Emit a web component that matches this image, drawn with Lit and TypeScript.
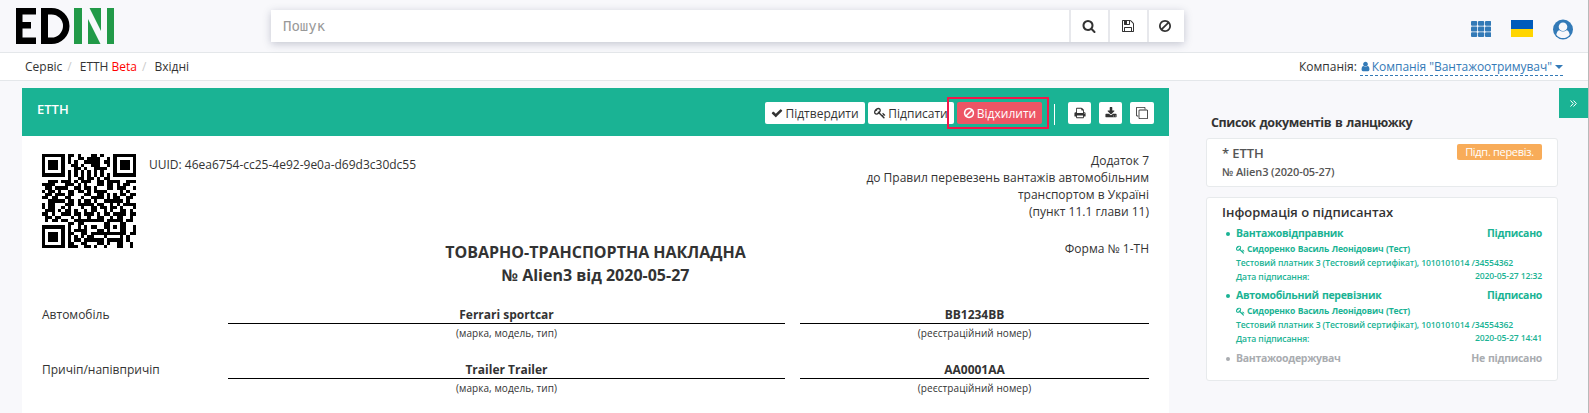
import { LitElement, html, svg, css } from "lit";
import { customElement, property } from "lit/decorators.js";

const PATHS: Record<string, string> = {
  search: "M1216 832q0-185-131.5-316.5t-316.5-131.5-316.5 131.5-131.5 316.5 131.5 316.5 316.5 131.5 316.5-131.5 131.5-316.5zm512 832q0 52-38 90t-90 38q-54 0-90-38l-343-342q-179 124-399 124-143 0-273.5-55.5t-225-150-150-225-55.5-273.5 55.5-273.5 150-225 225-150 273.5-55.5 273.5 55.5 225 150 150 225 55.5 273.5q0 220-124 399l343 343q37 37 37 90z",
  save: "M512 1536h768v-384h-768v384zm896 0h128v-896q0-14-10-38.5t-20-34.5l-281-281q-10-10-34-20t-39-10v416q0 40-28 68t-68 28h-576q-40 0-68-28t-28-68v-416h-128v1280h128v-416q0-40 28-68t68-28h832q40 0 68 28t28 68v416zm-384-928v-320q0-13-9.5-22.5t-22.5-9.5h-192q-13 0-22.5 9.5t-9.5 22.5v320q0 13 9.5 22.5t22.5 9.5h192q13 0 22.5-9.5t9.5-22.5zm640 32v928q0 40-28 68t-68 28h-1344q-40 0-68-28t-28-68v-1344q0-40 28-68t68-28h928q40 0 88 20t76 48l280 280q28 28 48 76t20 88z",
  ban: "M1440 893q0-161-87-295l-754 753q137 89 297 89 111 0 211.5-43.5t173.5-116.5 116-174.5 43-212.5zm-999 299l755-754q-135-91-300-91-148 0-273 73t-198 199-73 274q0 162 89 299zm1223-299q0 157-61 300t-163.5 246-245 164-298.5 61-298.5-61-245-164-163.5-246-61-300 61-299.5 163.5-245.5 245-164 298.5-61 298.5 61 245 164 163.5 245.5 61 299.5z",
  check: "M1671 566q0 40-28 68l-724 724-136 136q-28 28-68 28t-68-28l-136-136-362-362q-28-28-28-68t28-68l136-136q28-28 68-28t68 28l294 295 656-657q28-28 68-28t68 28l136 136q28 28 28 68z",
  key: "M832 512q0-80-56-136t-136-56-136 56-56 136q0 42 19 83-41-19-83-19-80 0-136 56t-56 136 56 136 136 56 136-56 56-136q0-42-19-83 41 19 83 19 80 0 136-56t56-136zm851 704q0 17-49 66t-66 49q-9 0-28.5-16t-36.5-33-38.5-40-24.5-26l-96 96 220 220q28 28 28 68 0 42-39 81t-81 39q-40 0-68-28l-671-671q-176 131-365 131-163 0-265.5-102.5t-102.5-265.5q0-160 95-313t248-248 313-95q163 0 265.5 102.5t102.5 265.5q0 189-131 365l355 355 96-96q-3-3-26-24.5t-40-38.5-33-36.5-16-28.5q0-17 49-66t66-49q13 0 23 10 6 6 46 44.5t82 79.5 86.5 86 73 78 28.5 41z",
  print: "M448 1536h896v-256h-896v256zm0-640h896v-384h-160q-40 0-68-28t-28-68v-160h-640v640zm1152 64q0-26-19-45t-45-19-45 19-19 45 19 45 45 19 45-19 19-45zm128 0v416q0 13-9.5 22.5t-22.5 9.5h-224v160q0 40-28 68t-68 28h-960q-40 0-68-28t-28-68v-160h-224q-13 0-22.5-9.5t-9.5-22.5v-416q0-79 56.5-135.5t135.5-56.5h64v-544q0-40 28-68t68-28h672q40 0 88 20t76 48l152 152q28 28 48 76t20 88v256h64q79 0 135.5 56.5t56.5 135.5z",
  download: "M1344 1344q0-26-19-45t-45-19-45 19-19 45 19 45 45 19 45-19 19-45zm256 0q0-26-19-45t-45-19-45 19-19 45 19 45 45 19 45-19 19-45zm128-224v320q0 40-28 68t-68 28h-1472q-40 0-68-28t-28-68v-320q0-40 28-68t68-28h465l135 136q58 56 136 56t136-56l136-136h464q40 0 68 28t28 68zm-325-569q17 41-14 70l-448 448q-18 19-45 19t-45-19l-448-448q-31-29-14-70 17-39 59-39h256v-448q0-26 19-45t45-19h256q26 0 45 19t19 45v448h256q42 0 59 39z",
  clone: "M1664 1632v-1088q0-13-9.5-22.5t-22.5-9.5h-1088q-13 0-22.5 9.5t-9.5 22.5v1088q0 13 9.5 22.5t22.5 9.5h1088q13 0 22.5-9.5t9.5-22.5zm128-1088v1088q0 66-47 113t-113 47h-1088q-66 0-113-47t-47-113v-1088q0-66 47-113t113-47h1088q66 0 113 47t47 113zm-384-384v160h-128v-160q0-13-9.5-22.5t-22.5-9.5h-1088q-13 0-22.5 9.5t-9.5 22.5v1088q0 13 9.5 22.5t22.5 9.5h160v128h-160q-66 0-113-47t-47-113v-1088q0-66 47-113t113-47h1088q66 0 113 47t47 113z",
  user: "M1536 1399q0 109-62.5 187t-150.5 78h-854q-88 0-150.5-78t-62.5-187q0-85 8.5-160.5t31.5-152 58.5-131 94-89 134.5-34.5q131 128 313 128t313-128q76 0 134.5 34.5t94 89 58.5 131 31.5 152 8.5 160.5zm-256-887q0 159-112.5 271.5t-271.5 112.5-271.5-112.5-112.5-271.5 112.5-271.5 271.5-112.5 271.5 112.5 112.5 271.5z",
};

const icon = (name: string, size: number) =>
  svg`<svg class="icon" width=${size} height=${size} viewBox="0 0 1792 1792"><path fill="currentColor" d=${PATHS[name]}/></svg>`;

const QR = [
  "#######.##.#...##.#...#######",
  "#.....#.#..##.####..#.#.....#",
  "#.###.#.#.#..#####.##.#.###.#",
  "#.###.#..##.#..###..#.#.###.#",
  "#.###.#...##.#..####..#.###.#",
  "#.....#.#.#.#.#.#.#...#.....#",
  "#######.#.#.#.#.#.#.#.#######",
  "........#..##.##.#.##........",
  "..###.###.#.###..##.####..###",
  "####...###.#.#...##.##.#.##..",
  ".##.####..##.##.#...##.###..#",
  "#.##.#..##.##.#.####....#.#..",
  ".##.###.##...##..##.#.#.##.##",
  "##.##..##...#..####.#.##..##.",
  "..#####.##.#.##.#..######.#..",
  "#.##...###.#####.##..#.#.####",
  "#.##..#.#...#..##.##.##.#...#",
  ".###.#.##.#..#.##..#.#..##.#.",
  "##.#..###.##.###.#.##.####.##",
  ".##.##...#.#..#..##..#.##..#.",
  ".#.##.##..#########.#####.##.",
  "........##.##......##...##...",
  "#######.#..#.#.##..##.#.##..#",
  "#.....#.#.####...##.#...##..#",
  "#.###.#.##..##.###########.##",
  "#.###.#.#.#.#.##...#....#.#..",
  "#.###.#.#.##.######.#####.#..",
  "#.....#.##..##...##.#..##..#.",
  "#######.###..##.#..#...##..#.",
];

@customElement("qr-code")
export class QrCode extends LitElement {
  static styles = css`
    :host { display: block; width: 94px; height: 94px; }
    .code { display: block; }
  `;
  render() {
    const d = QR.map((row, y) =>
      [...row].map((c, x) => (c === "#" ? `M${x} ${y}h1v1h-1z` : "")).join("")
    ).join("");
    return html`<svg class="code" width="94" height="94" viewBox="0 0 29 29" shape-rendering="crispEdges"><path d=${d} /></svg>`;
  }
}

@customElement("signer-entry")
export class SignerEntry extends LitElement {
  @property() role = "";
  @property() status = "";
  @property() date = "";
  static styles = css`
    :host { display: block; color: #1ab394; }
    :host(.pending) { color: #a9acb0; padding-top: 1px; }
    .row { display: flex; justify-content: space-between; }
    .head { font-size: 10.5px; font-weight: 700; line-height: 16px; letter-spacing: -0.3px; word-spacing: 0.8px; }
    .name { display: flex; align-items: center; gap: 2px; }
    .name::before { content: ""; width: 4px; height: 4px; border-radius: 50%; background: currentColor; margin: 1px 4px 0 -10px; }
    .sub { padding-top: 1px; font-size: 8.6px; line-height: 14px; white-space: nowrap; letter-spacing: -0.1px; font-weight: 600; }
    .person { font-weight: 700; display: flex; align-items: center; gap: 2px; letter-spacing: -0.16px; word-spacing: 0.5px; }
    .date { margin-top: -1px; letter-spacing: -0.13px; }
    .wrap { padding-bottom: 3px; }
    .icon { display: block; }
  `;
  render() {
    return html`
      <div class="row head"><span class="name">${this.role}</span><span>${this.status}</span></div>
      ${this.date
        ? html`<div class="sub wrap">
            <div class="person">${icon("key", 9)}Сидоренко Василь Леонідович (Тест)</div>
            <div>Тестовий платник 3 (Тестовий сертифікат), 1010101014 /34554362</div>
            <div class="row"><span>Дата підписання:</span><span class="date">${this.date}</span></div>
          </div>`
        : ""}
    `;
  }
}

@customElement("app-root")
export class AppRoot extends LitElement {
  static styles = css`
    :host { display: block; height: 413px; overflow: hidden; box-sizing: border-box; border-right: 1px solid #b9b9b9;
      background: #f8f8fb; color: #333; font: 12px/17px "Open Sans", "Noto Sans", sans-serif; }
    * { box-sizing: border-box; }
    .icon { display: block; flex: none; }
    .top { display: flex; height: 53px; border-bottom: 1px solid #e4e7ea; padding-left: 16px; }
    .logo { margin-top: 8px; width: 98px; height: 36px; }
    .search { display: flex; margin: 10px 0 0 157px; width: 913px; height: 32px; background: #fff; box-shadow: 0 2px 8px rgba(60,70,100,.28); }
    .input { width: 798px; padding-left: 12px; font: 14px/32px "DejaVu Sans Mono", monospace; color: #999; }
    .sbtn { width: 39px; padding-right: 2px; border-left: 2px solid #e7e8ec; display: flex; align-items: center; justify-content: center; }
    .sbtn:last-child { width: 37px; padding-right: 3px; }
    .tools { display: flex; margin-left: 287px; color: #337ab7; }
    .grid { margin-top: 21px; }
    .flag { width: 22px; height: 17px; margin: 20px 0 0 20px; background: linear-gradient(#005bbb 50%, #ffd500 50%); }
    .avatar { margin: 19px 0 0 20px; }
    .crumbs { display: flex; justify-content: space-between; height: 28px; padding: 5px 25px 0 25px; background: #fff; border-bottom: 1px solid #e4e7ea; }
    .path { display: flex; }
    .sep { color: #ccc; margin: 0 8px 0 5px; }
    .beta { color: #f00; }
    .company { display: flex; }
    .link { display: flex; align-items: center; height: 18px; margin-left: 3px; color: #337ab7; border-bottom: 1px dashed #337ab7; }
    .name { margin-left: 1px; letter-spacing: -0.04px; }
    .caret { border: 4px solid transparent; border-top-color: currentColor; border-bottom: 0; margin-left: 3px; }
    .main { display: flex; height: 332px; padding: 7px 0 0 22px; }
    .doc { width: 1147px; background: #fff; }
    .bar { display: flex; justify-content: space-between; height: 48px; background: #1ab394; color: #fff; padding: 14px 15px 0 15px; }
    .title { font-size: 13px; line-height: 18px; margin-top: -2px; font-weight: 600; }
    .actions { display: flex; height: 22px; }
    .btn { position: relative; display: flex; align-items: center; justify-content: center; gap: 2px; height: 22px; border-radius: 2px; background: #fff; color: #333; white-space: nowrap; }
    .ok { width: 100px; margin-right: 3px; }
    .sign { width: 86px; margin-right: 3px; }
    .no { width: 85px; background: #ed5565; color: #fff; }
    .no::after { content: ""; position: absolute; inset: -5px -7px -5px -10px; border: 2px solid #f3174a; }
    .rule { width: 1px; height: 21px; margin: 2px 13px 0 12px; background: #fff; }
    .sq { width: 23px; margin-right: 8px; }
    .sq:last-child { width: 24px; margin-right: 0; }
    .body { padding: 18px 20px 0 20px; }
    .first { display: flex; height: 94px; }
    .uuid { margin: 2px 0 0 13px; }
    .annex { margin: -2px 0 0 auto; text-align: right; white-space: pre-line; line-height: 17.1px; }
    .form { position: relative; display: flex; justify-content: center; height: 52px; margin-top: -8px; }
    .heading { text-align: center; font-size: 16px; font-weight: 700; line-height: 23px; padding-top: 1px; }
    .number { position: absolute; right: 0; top: 0; }
    .field { display: grid; grid-template-columns: 186px 557px 349px; height: 55px; }
    .field > :last-child { margin-left: 15px; width: 349px; }
    .label { padding-top: 14px; }
    .value { text-align: center; }
    .strong { padding-top: 14px; height: 32px; line-height: 17px; font-weight: 700; border-bottom: 1px solid #000; }
    .hint { font-size: 10px; line-height: 18px; letter-spacing: 0.07px; }
    .side { flex: 1; padding-left: 37px; }
    .sidehead { display: flex; justify-content: space-between; height: 50px; }
    .chain { margin: 26px 0 0 5px; font-size: 12.5px; font-weight: 700; line-height: 18px; letter-spacing: -0.4px; word-spacing: 1px; }
    .toggle { width: 29px; height: 30px; background: #1ab394; display: flex; align-items: center; justify-content: center; }
    .card { width: 352px; background: #fff; border: 1px solid #e7eaec; border-radius: 3px; padding: 0 15px; }
    .one { height: 49px; padding-top: 4px; margin-bottom: 10px; font-size: 11px; font-weight: 600; color: #555; }
    .line { display: flex; justify-content: space-between; height: 20px; }
    .etth { font-size: 13px; line-height: 20px; letter-spacing: -0.1px; }
    .badge { width: 85px; height: 16px; margin-top: 1px; background: #f8ac59; color: #fff; border-radius: 2px; text-align: center; font-size: 11px; line-height: 16px; font-weight: 400; letter-spacing: -0.3px; }
    .num { letter-spacing: -0.1px; }
    .two { height: 184px; padding-top: 5px; }
    .info { font-size: 13px; line-height: 18px; font-weight: 600; }
    .list { padding: 4px 0 0 14px; }
  `;

  private field(label: string, a: string, b: string) {
    return html`<div class="field">
      <div class="label">${label}</div>
      <div class="value"><div class="strong">${a}</div><div class="hint">(марка, модель, тип)</div></div>
      <div class="value"><div class="strong">${b}</div><div class="hint">(реєстраційний номер)</div></div>
    </div>`;
  }

  render() {
    return html`
      <header class="top">
        <svg class="logo" viewBox="0 0 98 36">
          <path fill="#000" d="M0 0H20V6.500H6.500V14H15V20.500H6.500V29.500H20V36H0ZM25 0H35.500A18 18 0 0 1 35.500 36H25ZM32 6.500V29.500H35.500A11.500 11.500 0 0 0 35.500 6.500Z"/>
          <path fill="#229a48" d="M58 0H66V36H58ZM91 0H98V36H91ZM72 11L84.500 36H72ZM73.500 0H85V23Z"/>
        </svg>
        <div class="search">
          <div class="input">Пошук</div>
          <div class="sbtn">${icon("search", 14)}</div>
          <div class="sbtn">${icon("save", 14)}</div>
          <div class="sbtn">${icon("ban", 14)}</div>
        </div>
        <div class="tools">
          <svg class="icon grid" width="20" height="16" viewBox="0 0 20 16" fill="currentColor">
            ${[0, 5.6, 11.2].map((y) => [0, 7, 14].map((x) => svg`<rect x=${x} y=${y} width="6.200" height="4.800" rx="1"/>`))}
          </svg>
          <div class="flag"></div>
          <svg class="icon avatar" width="20" height="21" viewBox="0 0 20 21">
            <circle cx="10" cy="10.500" r="10" fill="currentColor"/>
            <path fill="#f8f8fb" d="M3.300 15.800C3.700 12.800 4.900 11.300 6.600 11.200A4.900 4.900 0 0 0 13.400 11.200C15.100 11.300 16.300 12.800 16.700 15.800A8.500 8.500 0 0 1 3.300 15.800Z"/>
            <circle cx="10" cy="7.800" r="4.300" fill="#f8f8fb"/>
          </svg>
        </div>
      </header>
      <nav class="crumbs">
        <div class="path">
          <span>Сервіс</span><span class="sep">/</span><span>ЕТТН <span class="beta">Beta</span></span><span class="sep">/</span><span>Вхідні</span>
        </div>
        <div class="company">Компанія:<span class="link">${icon("user", 11)}<span class="name">Компанія "Вантажоотримувач"</span><span class="caret"></span></span></div>
      </nav>
      <div class="main">
        <section class="doc">
          <div class="bar">
            <div class="title">ЕТТН</div>
            <div class="actions">
              <div class="btn ok">${icon("check", 12)}Підтвердити</div>
              <div class="btn sign">${icon("key", 12)}Підписати</div>
              <div class="btn no">${icon("ban", 12)}Відхилити</div>
              <div class="rule"></div>
              <div class="btn sq">${icon("print", 12)}</div>
              <div class="btn sq">${icon("download", 12)}</div>
              <div class="btn sq">${icon("clone", 12)}</div>
            </div>
          </div>
          <div class="body">
            <div class="first">
              <qr-code></qr-code>
              <div class="uuid">UUID: 46ea6754-cc25-4e92-9e0a-d69d3c30dc55</div>
              <div class="annex">Додаток 7
до Правил перевезень вантажів автомобільним
транспортом в Україні
(пункт 11.1 глави 11)</div>
            </div>
            <div class="form">
              <div class="heading">ТОВАРНО-ТРАНСПОРТНА НАКЛАДНА<br>№ Alien3 від 2020-05-27</div>
              <div class="number">Форма № 1-ТН</div>
            </div>
            ${this.field("Автомобіль", "Ferrari sportcar", "BB1234BB")}
            ${this.field("Причіп/напівпричіп", "Trailer Trailer", "AA0001AA")}
          </div>
        </section>
        <aside class="side">
          <div class="sidehead">
            <div class="chain">Список документів в ланцюжку</div>
            <div class="toggle"><svg width="7" height="7" viewBox="0 0 7 7" fill="none" stroke="#fff" stroke-width="1"><path d="M.5 .5L3.300 3.500L.5 6.500M3.500 .5L6.300 3.500L3.500 6.500"/></svg></div>
          </div>
          <div class="card one">
            <div class="line"><span class="etth">* ЕТТН</span><span class="badge">Підп. перевіз.</span></div>
            <div class="num">№ Alien3 (2020-05-27)</div>
          </div>
          <div class="card two">
            <div class="info">Інформація о підписантах</div>
            <div class="list">
              <signer-entry role="Вантажовідправник" status="Підписано" date="2020-05-27 12:32"></signer-entry>
              <signer-entry role="Автомобільний перевізник" status="Підписано" date="2020-05-27 14:41"></signer-entry>
              <signer-entry class="pending" role="Вантажоодержувач" status="Не підписано"></signer-entry>
            </div>
          </div>
        </aside>
      </div>
    `;
  }
}
